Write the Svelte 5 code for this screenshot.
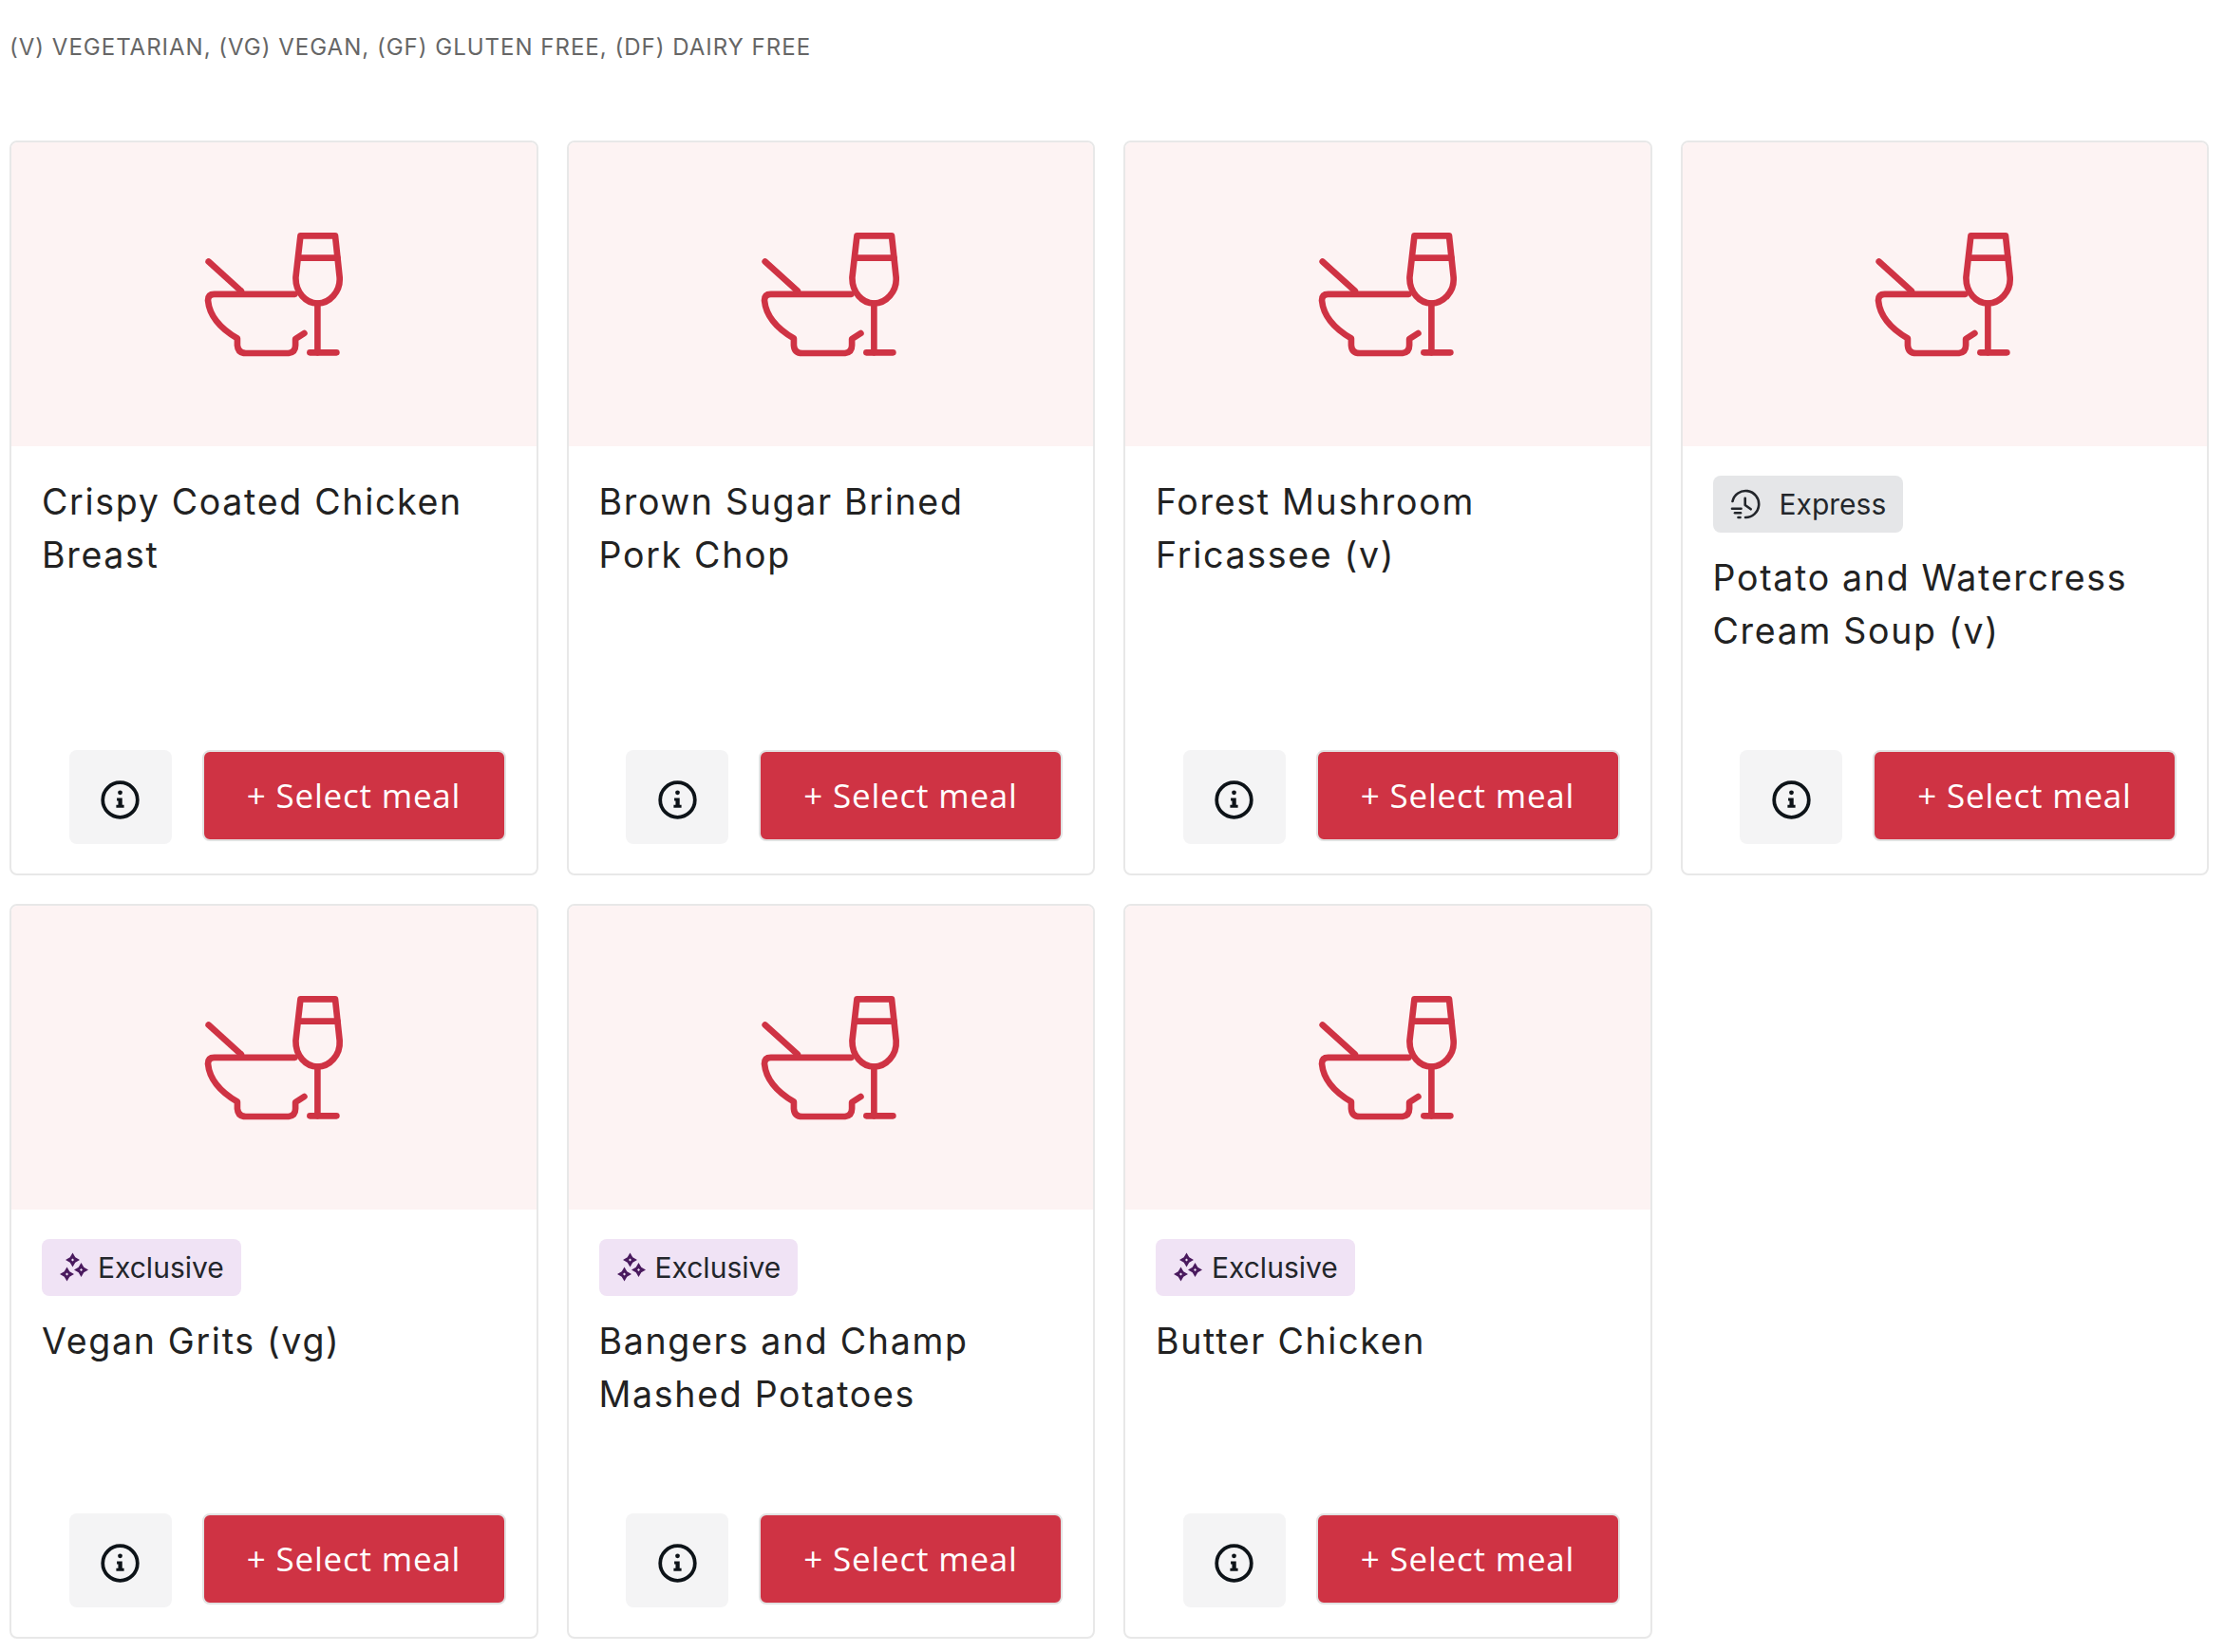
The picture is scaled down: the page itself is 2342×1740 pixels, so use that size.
<script>
  const meals = [
    { title: 'Crispy Coated Chicken Breast' },
    { title: 'Brown Sugar Brined Pork Chop' },
    { title: 'Forest Mushroom Fricassee (v)' },
    { title: 'Potato and Watercress Cream Soup (v)', badge: 'express' },
    { title: 'Vegan Grits (vg)', badge: 'exclusive' },
    { title: 'Bangers and Champ Mashed Potatoes', badge: 'exclusive' },
    { title: 'Butter Chicken', badge: 'exclusive' }
  ];
</script>

<main>
  <p class="legend">(V) Vegetarian, (VG) Vegan, (GF) Gluten Free, (DF) Dairy Free</p>

  <div class="grid">
    {#each meals as meal}
      <article class="card">
        <div class="image">
          <svg class="meal-icon" viewBox="64 70 460 400" fill="none" stroke="#cf3344" stroke-width="20" stroke-linecap="round" stroke-linejoin="round">
            <path d="M87 165 L190 258" />
            <path d="M360 268 H105 Q85 268 85 288 C90 340 130 380 178 408 V430 Q180 455 205 455 H340 Q362 452 362 430 V410 L390 392" />
            <path d="M378 83 H488 L502 215 C505 260 470 297 432 297 C395 297 362 262 363 215 Z" />
            <path d="M372 153 H495" />
            <path d="M432 297 V453" />
            <path d="M408 453 H492" />
          </svg>
        </div>
        <div class="body">
          {#if meal.badge === 'express'}
            <span class="badge express">
              <svg class="badge-icon" viewBox="0 0 32 32" fill="none" stroke="#23262b" stroke-width="2.6" stroke-linecap="round" stroke-linejoin="round">
                <path d="M2.500 13 A14 14 0 1 1 16 30" />
                <path d="M15.700 9.700 V17 L21.700 21.300" />
                <path d="M2 20.700 H11.500" />
                <path d="M5 25.300 H11" />
                <path d="M8.500 30 H10.500" />
              </svg>
              Express
            </span>
          {:else if meal.badge === 'exclusive'}
            <span class="badge exclusive">
              <svg class="badge-icon" viewBox="0 0 32 32" fill="#4a1a5e" fill-rule="evenodd">
                <path d="M14.500 0.500 L17.300 5.200 L22 8 L17.300 10.800 L14.500 15.500 L11.700 10.800 L7 8 L11.700 5.200 Z M14.500 6.500 L13 8 L14.500 9.500 L16 8 Z" />
                <path d="M23.500 11 L26.300 15.700 L31 18.500 L26.300 21.300 L23.500 26 L20.700 21.300 L16 18.500 L20.700 15.700 Z M23.500 17 L22 18.500 L23.500 20 L25 18.500 Z" />
                <path d="M8.500 15.500 L11.300 20.200 L16 23 L11.300 25.800 L8.500 30.500 L5.700 25.800 L1 23 L5.700 20.200 Z M8.500 21.500 L7 23 L8.500 24.500 L10 23 Z" />
              </svg>
              Exclusive
            </span>
          {/if}
          <h3>{meal.title}</h3>
        </div>
        <div class="actions">
          <button class="info" aria-label="More info">
            <svg viewBox="0 0 24 24" fill="none">
              <circle cx="12" cy="12" r="10.700" stroke="#0d1318" stroke-width="2.200" />
              <circle cx="12" cy="7.500" r="1.400" fill="#0d1318" />
              <path d="M10 10.800 H13.300 V15 H14.400 V16.900 H9.600 V15 H10.800 V12.600 H10 Z" fill="#0d1318" />
            </svg>
          </button>
          <button class="select">+ Select meal</button>
        </div>
      </article>
    {/each}
  </div>
</main>

<style>
  :global(body) {
    background: #fff;
  }
  main {
    padding: 37px 16px 12px 10px;
    font-family: "Inter", "Liberation Sans", sans-serif;
  }
  .legend {
    margin: 0 0 85px;
    font-size: 24px;
    line-height: 26px;
    letter-spacing: 1px;
    text-transform: uppercase;
    color: #666;
  }
  .grid {
    display: grid;
    grid-template-columns: repeat(4, 1fr);
    grid-auto-rows: 774px;
    gap: 30px;
  }
  .card {
    display: flex;
    flex-direction: column;
    border: 2px solid #e8e8e8;
    border-radius: 8px;
    overflow: hidden;
    background: #fff;
  }
  .image {
    flex: none;
    height: 320px;
    display: flex;
    align-items: center;
    justify-content: center;
    background: #fdf3f3;
  }
  .meal-icon {
    width: 153px;
    height: 133px;
  }
  .body {
    flex: 1;
    padding: 31px 32px 0;
  }
  h3 {
    margin: 0;
    max-width: 470px;
    font-size: 37.500px;
    line-height: 56px;
    font-weight: 400;
    letter-spacing: 1.700px;
    color: #222;
  }
  .badge {
    display: inline-flex;
    align-items: center;
    height: 60px;
    box-sizing: border-box;
    margin: 0 0 20px;
    padding: 0 18px;
    border-radius: 8px;
    font-size: 30px;
    color: #23262b;
    vertical-align: top;
  }
  .express {
    gap: 20px;
    background: #e5e6e8;
  }
  .exclusive {
    gap: 9px;
    background: #f0e3f5;
  }
  .badge-icon {
    width: 32px;
    height: 32px;
  }
  .actions {
    flex: none;
    display: flex;
    align-items: center;
    justify-content: flex-end;
    gap: 32px;
    padding: 0 32px 31px;
  }
  button {
    cursor: pointer;
    font-family: inherit;
  }
  .info {
    display: flex;
    align-items: center;
    justify-content: center;
    width: 108px;
    height: 99px;
    padding: 0;
    border: none;
    border-radius: 8px;
    background: #f4f4f5;
  }
  .info svg {
    width: 41px;
    height: 41px;
    margin-top: 5px;
  }
  .select {
    width: 320px;
    height: 96px;
    margin-bottom: 3px;
    padding: 0 0 2px;
    border: 2px solid #e2e2e2;
    border-radius: 8px;
    background: #cf3344;
    color: #fff;
    font-family: "Open Sans", sans-serif;
    font-size: 35px;
    font-weight: 500;
    letter-spacing: 0.800px;
  }
</style>
